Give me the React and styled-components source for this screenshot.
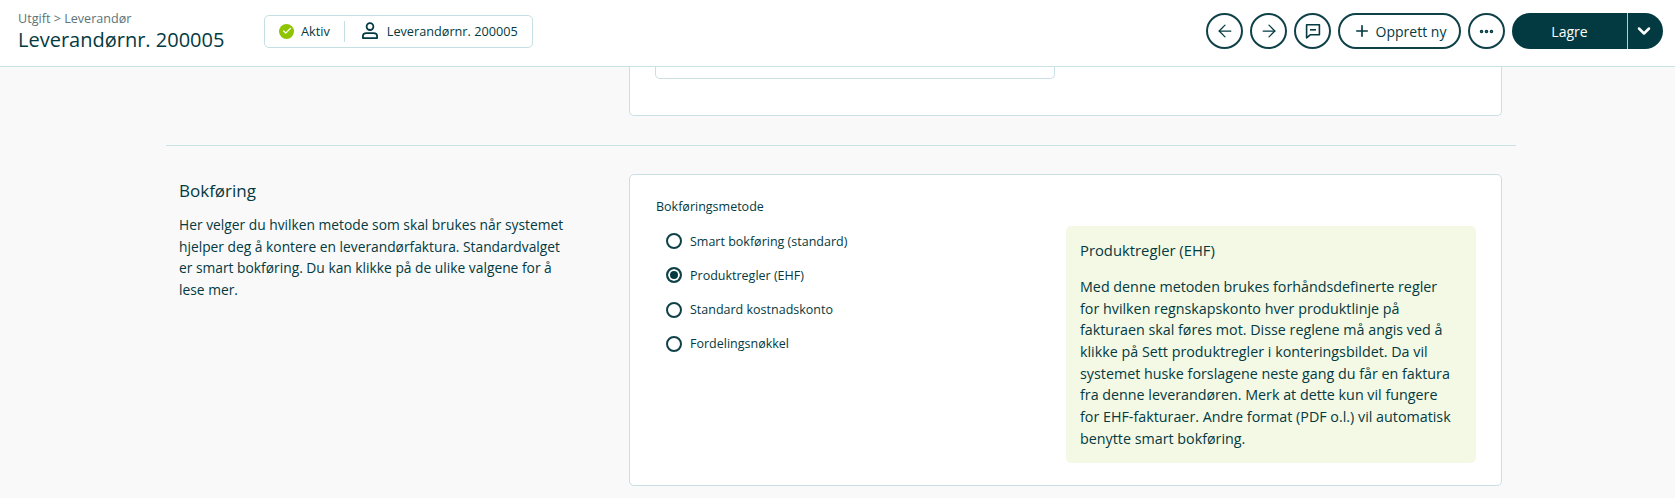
import React from "react";
import styled, { createGlobalStyle } from "styled-components";
import { ArrowLeft, ArrowRight, ChevronDown, Ellipsis, Plus, Check } from "lucide-react";

const GlobalStyle = createGlobalStyle`
  html, body {
    margin: 0;
    padding: 0;
    background: #f9f9f9;
    color: #033a41;
    font-family: "Open Sans", sans-serif;
    font-size: 14px;
  }
  * { box-sizing: border-box; }
`;

const METHODS = [
  { label: "Smart bokføring (standard)" },
  { label: "Produktregler (EHF)", checked: true },
  { label: "Standard kostnadskonto" },
  { label: "Fordelingsnøkkel" },
];

const INTRO_LINES = [
  "Her velger du hvilken metode som skal brukes når systemet",
  "hjelper deg å kontere en leverandørfaktura. Standardvalget",
  "er smart bokføring. Du kan klikke på de ulike valgene for å",
  "lese mer.",
];

const INFO_LINES = [
  "Med denne metoden brukes forhåndsdefinerte regler",
  "for hvilken regnskapskonto hver produktlinje på",
  "fakturaen skal føres mot. Disse reglene må angis ved å",
  "klikke på Sett produktregler i konteringsbildet. Da vil",
  "systemet huske forslagene neste gang du får en faktura",
  "fra denne leverandøren. Merk at dette kun vil fungere",
  "for EHF-fakturaer. Andre format (PDF o.l.) vil automatisk",
  "benytte smart bokføring.",
];

const PersonIcon = () => (
  <svg width="20" height="20" viewBox="0 0 20 20" fill="none" stroke="currentColor" strokeWidth="1.8">
    <circle cx="10" cy="5.6" r="3.4" />
    <path d="M2.9 17.1v-1.6c0-2 1.6-3.3 3.6-3.3h7c2 0 3.6 1.3 3.6 3.3v1.6z" strokeLinejoin="round" />
  </svg>
);

const CommentIcon = () => (
  <svg width="20" height="20" viewBox="0 0 20 20" fill="none" stroke="currentColor" strokeWidth="1.6">
    <path d="M3.6 3.8h12.8v10H7.2l-3.6 3z" strokeLinejoin="round" />
    <path d="M7 8.8h6" />
  </svg>
);

const App = () => (
  <Page>
    <GlobalStyle />
    <Header>
      <TitleBlock>
        <Breadcrumb>Utgift &gt; Leverandør</Breadcrumb>
        <Title>Leverandørnr. 200005</Title>
      </TitleBlock>
      <StatusBox>
        <StatusItem>
          <StatusDot>
            <Check size={10} strokeWidth={3} color="#fff" />
          </StatusDot>
          Aktiv
        </StatusItem>
        <StatusDivider />
        <StatusItem>
          <PersonIcon />
          Leverandørnr. 200005
        </StatusItem>
      </StatusBox>
      <Actions>
        <RoundButton><ArrowLeft size={20} strokeWidth={1.5} /></RoundButton>
        <RoundButton><ArrowRight size={20} strokeWidth={1.5} /></RoundButton>
        <RoundButton><CommentIcon /></RoundButton>
        <PillButton><Plus size={18} strokeWidth={2.2} />Opprett ny</PillButton>
        <RoundButton><Ellipsis size={17} strokeWidth={3} /></RoundButton>
        <SplitButton>
          <SaveButton>Lagre</SaveButton>
          <DropButton><ChevronDown size={20} strokeWidth={3} /></DropButton>
        </SplitButton>
      </Actions>
    </Header>
    <Content>
      <TopCard>
        <InnerBox />
      </TopCard>
      <Divider />
      <Section>
        <Intro>
          <SectionTitle>Bokføring</SectionTitle>
          {INTRO_LINES.map((line) => (
            <IntroLine key={line}>{line}</IntroLine>
          ))}
        </Intro>
        <Card>
          <FieldLabel>Bokføringsmetode</FieldLabel>
          <CardBody>
            <RadioList>
              {METHODS.map((m) => (
                <RadioRow key={m.label}>
                  <Radio $checked={m.checked} />
                  {m.label}
                </RadioRow>
              ))}
            </RadioList>
            <InfoBox>
              <InfoTitle>Produktregler (EHF)</InfoTitle>
              {INFO_LINES.map((line) => (
                <TextLine key={line}>{line}</TextLine>
              ))}
            </InfoBox>
          </CardBody>
        </Card>
      </Section>
    </Content>
  </Page>
);

export default App;

const Page = styled.div`
  height: 498px;
  overflow: hidden;
`;

const Header = styled.header`
  display: flex;
  align-items: center;
  height: 67px;
  padding: 0 12px 4px 18px;
  background: #fff;
  border-bottom: 1px solid #c9e3e5;
`;

const TitleBlock = styled.div`
  width: 246px;
`;

const Breadcrumb = styled.div`
  font-size: 12.6px;
  line-height: 17px;
  color: #5d7378;
`;

const Title = styled.h1`
  margin: 0;
  font-size: 20px;
  font-weight: 400;
  line-height: 26px;
`;

const StatusBox = styled.div`
  display: flex;
  align-items: center;
  width: 269px;
  height: 33px;
  padding-left: 14px;
  background: #fff;
  border: 1px solid #c6dfe3;
  border-radius: 5px;
`;

const StatusItem = styled.div`
  display: flex;
  align-items: center;
  gap: 7px;
  font-size: 12.7px;
`;

const StatusDot = styled.span`
  display: flex;
  align-items: center;
  justify-content: center;
  width: 15px;
  height: 15px;
  border-radius: 50%;
  background: #8fc400;
`;

const StatusDivider = styled.span`
  width: 1px;
  height: 21px;
  margin: 0 15px 0 14px;
  background: #c6dfe3;
`;

const Actions = styled.div`
  display: flex;
  align-items: center;
  gap: 7px;
  margin-left: auto;
`;

const RoundButton = styled.button`
  display: flex;
  align-items: center;
  justify-content: center;
  width: 37px;
  height: 36px;
  padding: 0;
  color: #033a41;
  background: #fff;
  border: 2px solid #0f4149;
  border-radius: 50%;
`;

const PillButton = styled.button`
  display: flex;
  align-items: center;
  justify-content: center;
  gap: 5px;
  width: 123px;
  height: 36px;
  padding: 0;
  color: #033a41;
  background: #fff;
  border: 2px solid #0f4149;
  border-radius: 18px;
  font-family: inherit;
  font-size: 14px;
`;

const SplitButton = styled.div`
  display: flex;
  width: 151px;
  height: 36px;
`;

const SaveButton = styled.button`
  width: 116px;
  padding: 0;
  color: #fff;
  background: #033a41;
  border: 0;
  border-right: 1px solid #b9cdd0;
  border-radius: 18px 0 0 18px;
  font-family: inherit;
  font-size: 14px;
`;

const DropButton = styled.button`
  display: flex;
  align-items: center;
  justify-content: center;
  flex: 1;
  padding: 0 4px 0 0;
  color: #fff;
  background: #033a41;
  border: 0;
  border-radius: 0 18px 18px 0;
`;

const Content = styled.main`
  width: 1350px;
  margin-left: 166px;
`;

const Card = styled.section`
  width: 873px;
  height: 312px;
  margin-left: auto;
  margin-right: 14px;
  padding: 23px 25px 0 26px;
  background: #fff;
  border: 1px solid #c9dfe4;
  border-radius: 5px;
`;

const TopCard = styled(Card)`
  height: 49px;
  margin-left: 463px;
  padding-top: 0;
  border-top: 0;
  border-radius: 0 0 5px 5px;
`;

const InnerBox = styled.div`
  width: 400px;
  height: 12px;
  margin-left: -1px;
  background: #fff;
  border: 1px solid #c9dfe4;
  border-top: 0;
  border-radius: 0 0 5px 5px;
`;

const Divider = styled.hr`
  height: 1px;
  margin: 29px 0 28px;
  background: #c9e3e5;
  border: 0;
`;

const Section = styled.div`
  display: flex;
`;

const Intro = styled.div`
  width: 463px;
  padding: 6px 0 0 13px;
`;

const SectionTitle = styled.h2`
  margin: 0 0 12px;
  font-size: 17px;
  font-weight: 400;
  line-height: 22px;
`;

const TextLine = styled.div`
  font-size: 14.3px;
  line-height: 21.65px;
  white-space: nowrap;
`;

const IntroLine = styled(TextLine)`
  font-size: 13.8px;
`;

const FieldLabel = styled.div`
  font-size: 12.5px;
  line-height: 18px;
`;

const CardBody = styled.div`
  display: flex;
  justify-content: space-between;
  margin-top: 10px;
`;

const RadioList = styled.div`
  display: flex;
  flex-direction: column;
  gap: 18.3px;
  padding: 7px 0 0 10px;
`;

const RadioRow = styled.label`
  display: flex;
  align-items: center;
  gap: 8px;
  height: 16px;
  font-size: 12.5px;
`;

const Radio = styled.span`
  width: 16px;
  height: 16px;
  border: 2px solid #0f4149;
  border-radius: 50%;
  background: ${(p) => (p.$checked ? "#033a41" : "#fff")};
  box-shadow: ${(p) => (p.$checked ? "inset 0 0 0 2px #fff" : "none")};
`;

const InfoBox = styled.aside`
  width: 410px;
  height: 237px;
  padding: 13px 14px;
  background: #f4f9e6;
  border-radius: 5px;
`;

const InfoTitle = styled.h3`
  margin: 0 0 15px;
  font-size: 14.8px;
  font-weight: 400;
  line-height: 22px;
`;
